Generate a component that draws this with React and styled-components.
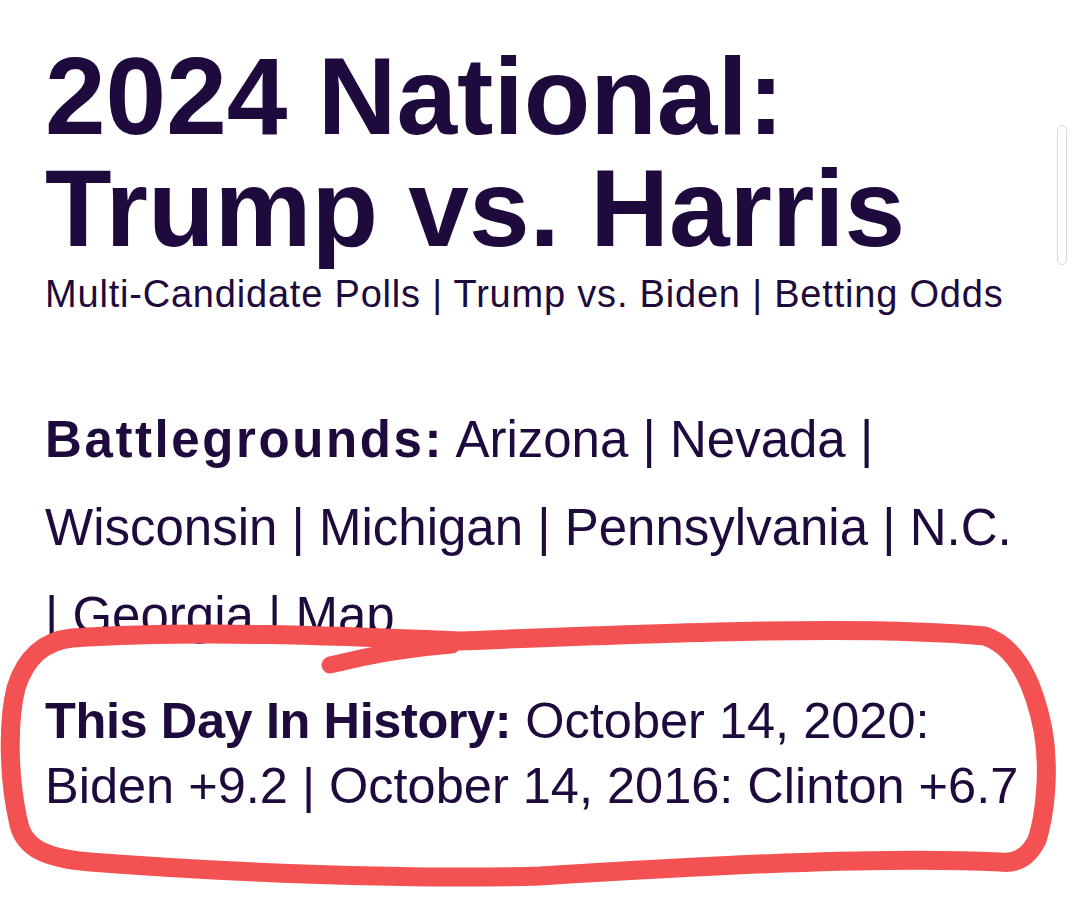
import { Fragment } from "react";
import styled, { createGlobalStyle } from "styled-components";

const GlobalStyle = createGlobalStyle`
  html, body {
    margin: 0;
    padding: 0;
    background: #ffffff;
    overflow: hidden;
  }
  body {
    font-family: "Liberation Sans", Arial, Helvetica, sans-serif;
    color: #1e0a3c;
  }
`;

const Page = styled.div`
  position: relative;
  width: 1080px;
  height: 921px;
  box-sizing: border-box;
  padding: 40px 45px 0;
  overflow: hidden;
`;

const Content = styled.div`
  width: 988px;
`;

const Title = styled.h1`
  margin: 0;
  font-size: 109px;
  line-height: 112px;
  font-weight: 700;
`;

const SubNav = styled.p`
  margin: 8px 0 0;
  font-size: 38px;
  line-height: 44px;
  letter-spacing: 0.8px;
`;

const Block = styled.p`
  margin: ${(p) => p.$top}px 0 0;
  font-size: ${(p) => p.$size}px;
  line-height: ${(p) => p.$lh}px;
`;

const Label = styled.strong`
  font-weight: 700;
  letter-spacing: ${(p) => p.$spacing || 0}px;
`;

const NavLink = styled.a`
  color: inherit;
  text-decoration: none;
`;

const Scrollbar = styled.div`
  position: absolute;
  top: 125px;
  left: 1057px;
  width: 10px;
  height: 140px;
  box-sizing: border-box;
  border: 1px solid #d9d9d9;
  border-radius: 6px;
  background: #ffffff;
`;

const Scribble = styled.svg`
  position: absolute;
  top: 0;
  left: 0;
  width: 1080px;
  height: 921px;
  pointer-events: none;
`;

const LinkList = ({ items }) =>
  items.map((item, i) => (
    <Fragment key={item}>
      {i > 0 && " | "}
      <NavLink href="#">{item}</NavLink>
    </Fragment>
  ));

const battlegrounds = [
  "Arizona",
  "Nevada",
  "Wisconsin",
  "Michigan",
  "Pennsylvania",
  "N.C.",
  "Georgia",
  "Map",
];

export default function App() {
  return (
    <>
      <GlobalStyle />
      <Page>
        <Content>
          <Title>
            2024 National:
            <br />
            Trump vs. Harris
          </Title>
          <SubNav>
            <LinkList items={["Multi-Candidate Polls", "Trump vs. Biden", "Betting Odds"]} />
          </SubNav>
          <Block $top={80} $size={51} $lh={88}>
            <Label $spacing={2.6}>Battlegrounds:</Label> <LinkList items={battlegrounds} />
          </Block>
          <Block $top={28} $size={50.5} $lh={65}>
            <Label $spacing={-0.4}>This Day In History:</Label> October 14, 2020: Biden +9.2 |
            October 14, 2016: Clinton +6.7
          </Block>
        </Content>
        <Scrollbar />
        <Scribble viewBox="0 0 1080 921">
          <g
            fill="none"
            stroke="#f45252"
            strokeWidth="19"
            strokeLinecap="round"
            strokeLinejoin="round"
          >
            <path d="M 460 641 C 640 634, 860 624, 985 636 C 1020 648, 1035 690, 1043 730 C 1050 770, 1045 815, 1037 840 C 1028 858, 1015 864, 1000 862 C 880 856, 700 866, 540 876 C 400 880, 220 872, 90 862 C 40 858, 22 845, 18 820 C 8 775, 8 720, 16 688 C 26 656, 45 641, 72 638 C 200 630, 340 636, 460 641" />
            <path d="M 330 665 C 370 655, 410 648, 452 645" strokeWidth="17" />
          </g>
        </Scribble>
      </Page>
    </>
  );
}
